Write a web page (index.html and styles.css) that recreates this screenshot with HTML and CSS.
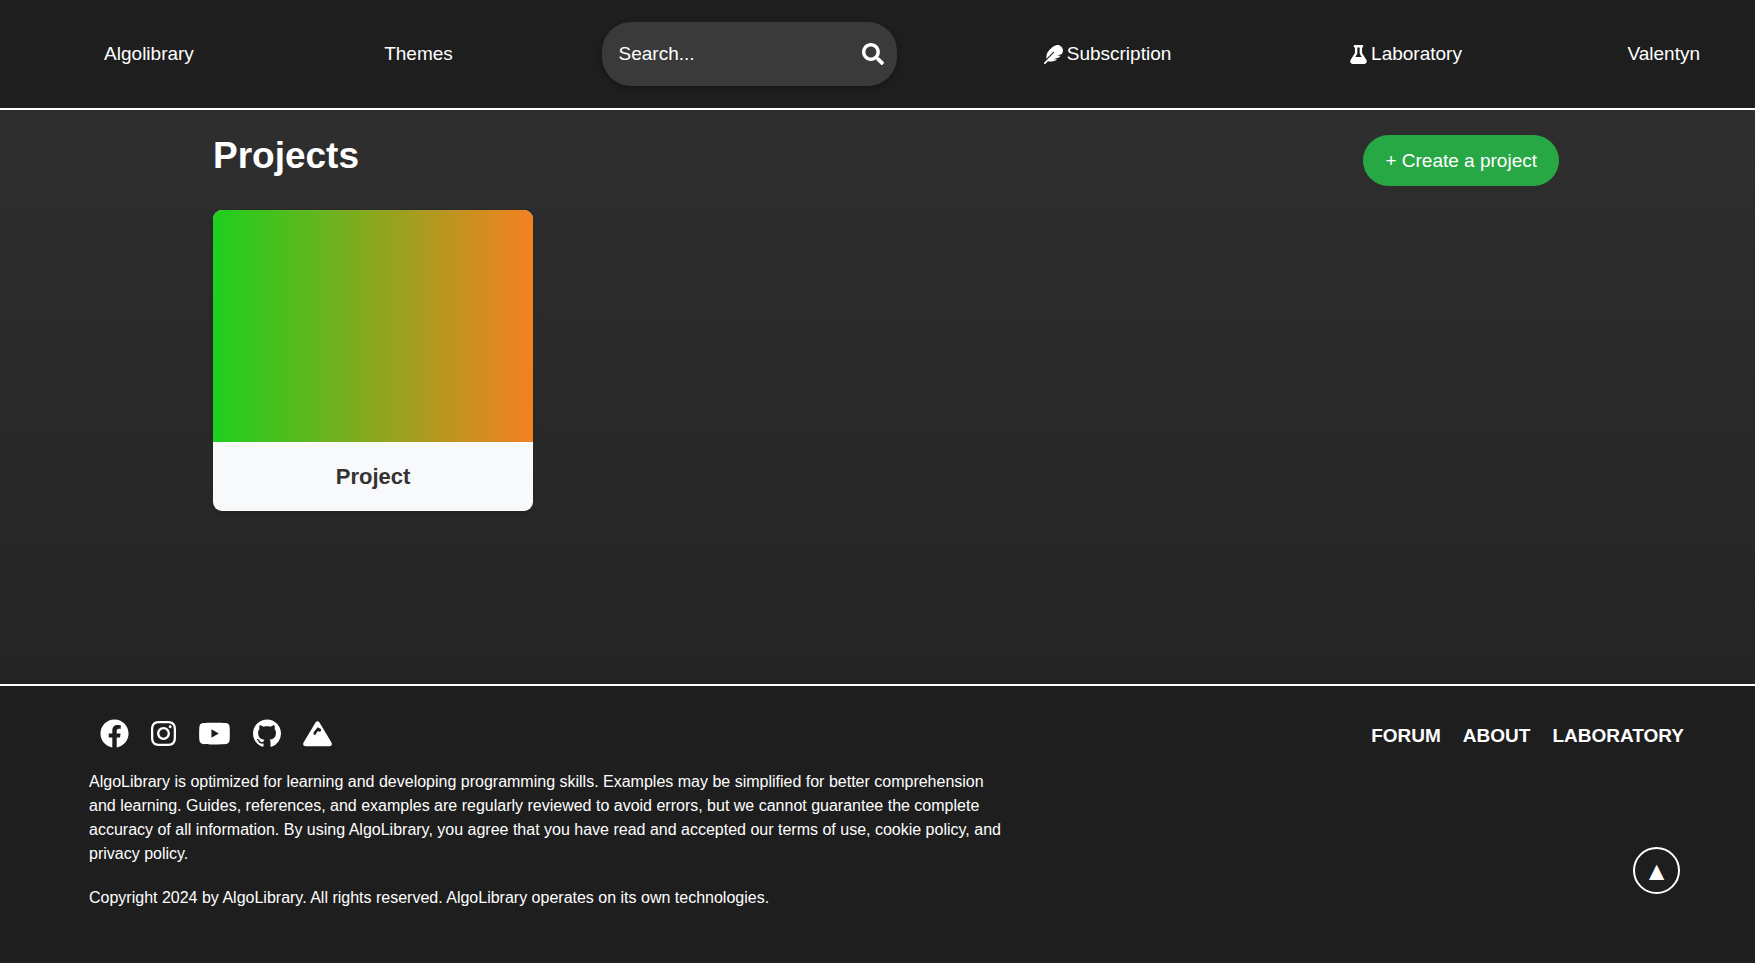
FILE: index.html
```html
<!DOCTYPE html>
<html lang="en">
<head>
<meta charset="utf-8">
<title>Algolibrary – Projects</title>
<link rel="stylesheet" href="styles.css">
</head>
<body>
<header class="topbar">
  <nav class="nav">
    <a class="nav-link" href="#">Algolibrary</a>
    <a class="nav-link" href="#">Themes</a>
    <form class="search" role="search">
      <input class="search-input" type="search" placeholder="Search..." aria-label="Search">
      <button class="search-button" type="button" aria-label="Submit search">
        <svg width="22" height="22" viewBox="0 0 512 512" fill="currentColor"><path d="M505 442.7L405.3 343c-4.5-4.5-10.6-7-17-7H372c27.6-35.3 44-79.7 44-128C416 93.1 322.9 0 208 0S0 93.1 0 208s93.1 208 208 208c48.3 0 92.7-16.4 128-44v16.3c0 6.4 2.5 12.5 7 17l99.7 99.7c9.4 9.4 24.6 9.4 33.9 0l28.3-28.3c9.4-9.4 9.4-24.6.1-34zM208 336c-70.7 0-128-57.2-128-128 0-70.7 57.2-128 128-128 70.7 0 128 57.2 128 128 0 70.7-57.2 128-128 128z"/></svg>
      </button>
    </form>
    <a class="nav-link" href="#"><svg width="19" height="19" viewBox="0 0 512 512" fill="currentColor"><path d="M467.14 44.84c-62.55-62.48-161.67-64.78-252.28 25.73-78.61 78.52-60.98 60.92-85.75 85.66-60.46 60.39-70.39 150.83-63.79 211.17l178.44-178.25c6.26-6.25 16.4-6.25 22.65 0s6.25 16.38 0 22.63L7.04 471.03c-9.38 9.37-9.38 24.57 0 33.94 9.38 9.37 24.6 9.37 33.98 0l66.1-66.03C159.42 454.65 279 457.11 353.95 384h-98.19l147.57-49.14c49.99-49.93 36.38-36.18 46.31-46.86h-97.78l131.54-43.8c45.44-74.46 34.31-148.84-16.26-199.36z"/></svg>Subscription</a>
    <a class="nav-link" href="#"><svg width="17" height="19" viewBox="0 0 448 512" fill="currentColor"><path d="M437.2 403.5L320 215V64h8c13.3 0 24-10.7 24-24V24c0-13.3-10.7-24-24-24H120c-13.3 0-24 10.7-24 24v16c0 13.3 10.7 24 24 24h8v151L10.8 403.5C-18.5 450.6 15.3 512 70.9 512h306.2c55.7 0 89.4-61.5 60.1-108.5zM137.9 320l48.2-77.6c3.7-5.2 5.8-11.6 5.8-18.4V64h64v160c0 6.9 2.2 13.2 5.8 18.4l48.2 77.6h-172z"/></svg>Laboratory</a>
    <a class="nav-link nav-user" href="#">Valentyn</a>
  </nav>
</header>

<main class="main">
  <div class="main-head">
    <h1 class="title">Projects</h1>
    <button class="create" type="button">+ Create a project</button>
  </div>
  <div class="projects">
    <a class="card" href="#">
      <div class="card-cover"></div>
      <h2 class="card-name">Project</h2>
    </a>
  </div>
</main>

<footer class="footer">
  <div class="footer-info">
    <div class="social">
      <a class="social-link" href="#" aria-label="Facebook"><svg width="29" height="29" viewBox="0 0 512 512" fill="currentColor"><path d="M504 256C504 119 393 8 256 8S8 119 8 256c0 123.78 90.69 226.38 209.25 245V327.69h-63V256h63v-54.64c0-62.15 37-96.48 93.67-96.48 27.14 0 55.52 4.84 55.52 4.84v61h-31.28c-30.8 0-40.41 19.12-40.41 38.73V256h68.78l-11 71.69h-57.78V501C413.31 482.38 504 379.78 504 256z"/></svg></a>
      <a class="social-link" href="#" aria-label="Instagram"><svg width="25" height="29" viewBox="0 0 448 512" fill="currentColor"><path d="M224.1 141c-63.6 0-114.9 51.3-114.9 114.9s51.3 114.9 114.9 114.9S339 319.5 339 255.9 287.7 141 224.1 141zm0 189.6c-41.1 0-74.7-33.5-74.7-74.7s33.5-74.7 74.7-74.7 74.7 33.5 74.7 74.7-33.6 74.7-74.7 74.7zm146.4-194.3c0 14.9-12 26.8-26.8 26.8-14.9 0-26.8-12-26.8-26.8s12-26.8 26.8-26.8 26.8 12 26.8 26.8zm76.1 27.2c-1.7-35.9-9.9-67.7-36.2-93.9-26.2-26.2-58-34.4-93.9-36.2-37-2.1-147.9-2.1-184.9 0-35.8 1.7-67.6 9.9-93.9 36.1s-34.4 58-36.2 93.9c-2.1 37-2.1 147.9 0 184.9 1.7 35.9 9.9 67.7 36.2 93.9s58 34.4 93.9 36.2c37 2.1 147.9 2.1 184.9 0 35.9-1.7 67.7-9.9 93.9-36.2 26.2-26.2 34.4-58 36.2-93.9 2.1-37 2.1-147.8 0-184.8zM398.8 388c-7.8 19.6-22.9 34.7-42.6 42.6-29.5 11.7-99.5 9-132.1 9s-102.7 2.6-132.1-9c-19.6-7.8-34.7-22.9-42.6-42.6-11.7-29.5-9-99.5-9-132.1s-2.6-102.7 9-132.1c7.8-19.6 22.9-34.7 42.6-42.6 29.5-11.7 99.5-9 132.1-9s102.7-2.6 132.1 9c19.6 7.8 34.7 22.9 42.6 42.6 11.7 29.5 9 99.5 9 132.1s2.7 102.7-9 132.1z"/></svg></a>
      <a class="social-link" href="#" aria-label="YouTube"><svg width="33" height="29" viewBox="0 0 576 512" fill="currentColor"><path d="M288 64C400 64 458 66 494 71C529 76 549 98 554 132C560 176 560 336 554 380C549 414 529 436 494 441C458 446 400 448 288 448S118 446 82 441C47 436 27 414 22 380C16 336 16 176 22 132C27 98 47 76 82 71C118 66 176 64 288 64ZM234 182V330L364 256Z" fill-rule="evenodd"/></svg></a>
      <a class="social-link" href="#" aria-label="GitHub"><svg width="28" height="29" viewBox="0 0 16 16" fill="currentColor"><path d="M8 0C3.58 0 0 3.58 0 8c0 3.54 2.29 6.53 5.47 7.59.4.07.55-.17.55-.38 0-.19-.01-.82-.01-1.49-2.01.37-2.53-.49-2.69-.94-.09-.23-.48-.94-.82-1.13-.28-.15-.68-.52-.01-.53.63-.01 1.08.58 1.23.82.72 1.21 1.87.87 2.33.66.07-.52.28-.87.51-1.07-1.78-.2-3.64-.89-3.64-3.95 0-.87.31-1.59.82-2.15-.08-.2-.36-1.02.08-2.12 0 0 .67-.21 2.2.82.64-.18 1.32-.27 2-.27s1.36.09 2 .27c1.53-1.04 2.2-.82 2.2-.82.44 1.1.16 1.92.08 2.12.51.56.82 1.27.82 2.15 0 3.07-1.87 3.75-3.65 3.95.29.25.54.73.54 1.48 0 1.07-.01 1.93-.01 2.2 0 .21.15.46.55.38A8.01 8.01 0 0 0 16 8c0-4.42-3.58-8-8-8z"/></svg></a>
      <a class="social-link" href="#" aria-label="Algolibrary"><svg width="29" height="29" viewBox="0 0 87 87" fill="currentColor"><path d="M38 10Q43 3 49 10L85 70Q90 82 78 82H9Q-3 82 2 70ZM32 48L37 47L44 37L52 38L55 31L44 25L32 40Z" fill-rule="evenodd"/></svg></a>
    </div>
    <p class="footer-text">AlgoLibrary is optimized for learning and developing programming skills. Examples may be simplified for better comprehension and learning. Guides, references, and examples are regularly reviewed to avoid errors, but we cannot guarantee the complete accuracy of all information. By using AlgoLibrary, you agree that you have read and accepted our terms of use, cookie policy, and privacy policy.</p>
    <p class="footer-text">Copyright 2024 by AlgoLibrary. All rights reserved. AlgoLibrary operates on its own technologies.</p>
  </div>
  <div class="footer-side">
    <nav class="footer-nav">
      <a class="footer-link" href="#">FORUM</a>
      <a class="footer-link" href="#">ABOUT</a>
      <a class="footer-link" href="#">LABORATORY</a>
    </nav>
    <button class="to-top" type="button" aria-label="Back to top">▲</button>
  </div>
</footer>
</body>
</html>
```
FILE: styles.css
```css
* {
  box-sizing: border-box;
}

body {
  margin: 0;
  min-height: 100vh;
  display: flex;
  flex-direction: column;
  background: linear-gradient(#303030, #202020);
  color: #fff;
  font-family: "Liberation Sans", Arial, sans-serif;
  font-size: 19px;
}

a {
  color: inherit;
  text-decoration: none;
}

button,
input {
  font: inherit;
  color: inherit;
  border: 0;
  background: none;
}

svg {
  display: block;
}

.topbar {
  padding: 22px 0;
  background: #1e1e1e;
  border-bottom: 2px solid #fff;
}

.nav {
  display: grid;
  grid-template-columns: 298fr 241fr 420fr 297fr 300fr 199fr;
  align-items: center;
  justify-items: center;
}

.nav-link {
  display: flex;
  align-items: center;
  gap: 4px;
}

.nav-user {
  justify-self: end;
  margin-right: 55px;
}

.search {
  display: flex;
  align-items: center;
  width: 295px;
  height: 64px;
  padding: 0 13px 0 17px;
  border-radius: 29px;
  background: #3a3a3a;
  box-shadow: 0 2px 6px rgba(0, 0, 0, 0.3);
}

.search-input {
  flex: 1;
  min-width: 0;
  padding: 0;
  outline: 0;
}

.search-input::placeholder {
  color: #fff;
  opacity: 1;
}

.search-button {
  padding: 0;
  cursor: pointer;
}

.main {
  flex: 1;
  padding: 25px 196px 60px 213px;
}

.main-head {
  display: flex;
  justify-content: space-between;
  align-items: flex-start;
  margin-bottom: 24px;
}

.title {
  margin: 0;
  font-size: 37px;
  line-height: 42px;
}

.create {
  height: 51px;
  padding: 0 22px;
  border-radius: 26px;
  background: #28a745;
  cursor: pointer;
}

.projects {
  display: grid;
  grid-template-columns: repeat(auto-fill, 320px);
  gap: 22px;
}

.card {
  overflow: hidden;
  border-radius: 9px;
  background: #f8f9fb;
  box-shadow: 0 2px 4px rgba(0, 0, 0, 0.1);
}

.card-cover {
  height: 232px;
  background: linear-gradient(90deg, #1dd01d, #f58021);
}

.card-name {
  margin: 0;
  padding: 22px;
  color: #333;
  font-size: 22px;
  line-height: 25px;
  text-align: center;
}

.footer {
  display: flex;
  justify-content: space-between;
  padding: 33px 71px 53px 89px;
  background: #1e1e1e;
  border-top: 2px solid #fff;
}

.footer-info {
  max-width: 920px;
}

.social {
  display: flex;
  gap: 22px;
  padding-left: 11px;
  margin-bottom: 22px;
}

.footer-text {
  margin: 0 0 20px;
  font-size: 16px;
  line-height: 24px;
}

.footer-text:last-child {
  margin-bottom: 0;
}

.footer-side {
  display: flex;
  flex-direction: column;
  justify-content: space-between;
  align-items: flex-end;
  padding: 6px 0 16px;
}

.footer-nav {
  display: flex;
  gap: 22px;
  font-weight: bold;
}

.to-top {
  width: 47px;
  height: 47px;
  margin-right: 4px;
  padding: 0;
  border: 2px solid #fff;
  border-radius: 50%;
  font-size: 26px;
  line-height: 1;
  cursor: pointer;
}
```
